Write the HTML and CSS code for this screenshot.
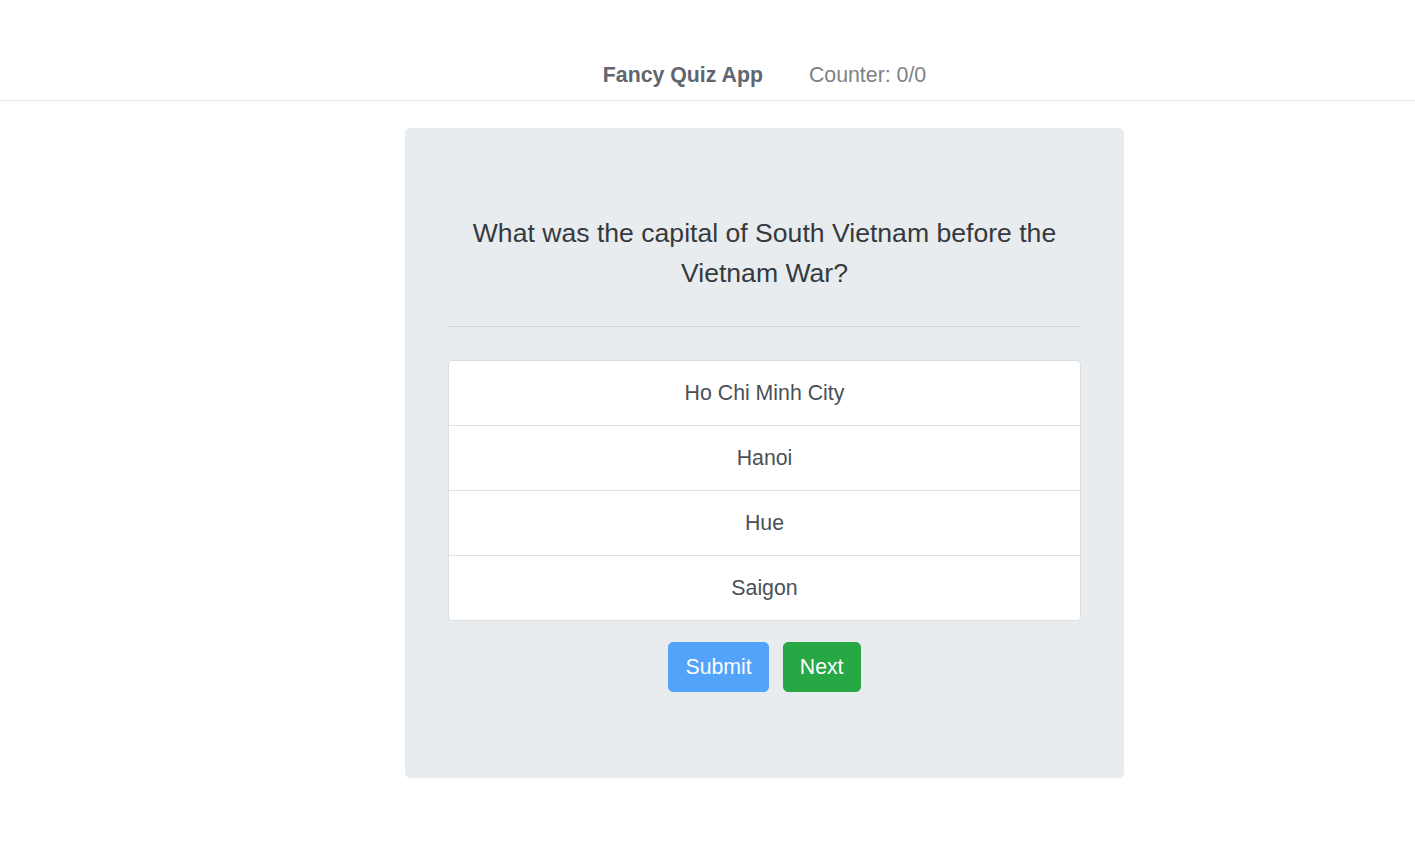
FILE: index.html
```html
<!DOCTYPE html>
<html lang="en">
<head>
<meta charset="utf-8">
<title>Fancy Quiz App</title>
<link rel="stylesheet" href="styles.css">
</head>
<body>
<nav class="navbar">
  <div class="navbar-inner">
    <span class="brand">Fancy Quiz App</span>
    <span class="counter">Counter: 0/0</span>
  </div>
</nav>
<main class="page">
  <section class="jumbotron">
    <p class="question">What was the capital of South Vietnam before the Vietnam War?</p>
    <hr class="divider">
    <ul class="answers">
      <li class="answer">Ho Chi Minh City</li>
      <li class="answer">Hanoi</li>
      <li class="answer">Hue</li>
      <li class="answer">Saigon</li>
    </ul>
    <div class="actions">
      <button class="btn btn-submit" disabled>Submit</button>
      <button class="btn btn-next">Next</button>
    </div>
  </section>
</main>
</body>
</html>
```
FILE: styles.css
```css
* { box-sizing: border-box; }

html, body {
  margin: 0;
  padding: 0;
  background: #fff;
  font-family: "Liberation Sans", Arial, sans-serif;
}

.navbar {
  border-bottom: 1px solid #e6e6e6;
  padding: 59px 0 9px;
}

.navbar-inner {
  margin-left: 405px;
  width: 719px;
  display: flex;
  justify-content: center;
  align-items: center;
  gap: 46px;
  font-size: 21.3px;
  line-height: 32px;
}

.brand {
  font-weight: bold;
  color: #5f6670;
}

.counter {
  color: #7d8185;
}

.page {
  padding-top: 27px;
}

.jumbotron {
  margin-left: 405px;
  width: 719px;
  background: #e9ecef;
  border-radius: 5px;
  padding: 85px 43px 86px;
}

.question {
  margin: 0;
  text-align: center;
  font-size: 26.6px;
  line-height: 40px;
  color: #343a40;
}

.divider {
  margin: 33px 0;
  border: 0;
  border-top: 1px solid #d3d6d9;
}

.answers {
  list-style: none;
  margin: 0;
  padding: 0;
  background: #fff;
  border: 1px solid #dcdfe2;
  border-radius: 4px;
}

.answer {
  text-align: center;
  font-size: 21.3px;
  line-height: 32px;
  padding: 16px 20px;
  color: #495057;
  border-top: 1px solid #dfe1e3;
}

.answer:first-child {
  border-top: 0;
}

.actions {
  display: flex;
  justify-content: center;
  gap: 14px;
  margin-top: 21px;
}

.btn {
  font-family: inherit;
  font-size: 21.3px;
  line-height: 32px;
  padding: 8px 16px;
  border: 1px solid transparent;
  border-radius: 5px;
  color: #fff;
}

.btn-submit {
  background: #52a3f9;
  border-color: #52a3f9;
  color: #fbfcfd;
}

.btn-next {
  background: #28a745;
  border-color: #28a745;
}
```
